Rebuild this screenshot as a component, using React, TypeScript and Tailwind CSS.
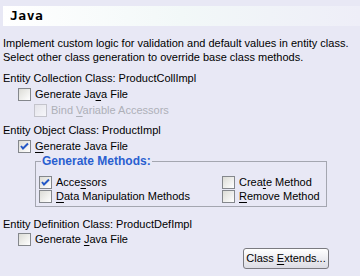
import React from "react";

const font = { fontFamily: '"Liberation Sans", Arial, sans-serif' };

function Mn({ text, at }: { text: string; at: number }) {
  return (
    <>
      {text.slice(0, at)}
      <span className="underline underline-offset-[2px]">{text[at]}</span>
      {text.slice(at + 1)}
    </>
  );
}

function Box({ checked = false, disabled = false }: { checked?: boolean; disabled?: boolean }) {
  return (
    <span
      className={
        "relative inline-block w-[13px] h-[13px] shrink-0 border " +
        (disabled
          ? "border-[#c4c4cc] bg-linear-to-br from-[#e4e4ea] to-[#f6f6fa]"
          : "border-[#84878c] bg-linear-to-br from-[#dcdcd6] to-white")
      }
    >
      {checked && (
        <svg className="absolute left-[1px] top-[1px]" width="9" height="9" viewBox="0 0 9 9">
          <path d="M1 4 L3 6.5 L8 1.5" fill="none" stroke="#2458c6" strokeWidth="2" />
        </svg>
      )}
    </span>
  );
}

function Check({
  label,
  checked,
  disabled,
}: {
  label: React.ReactNode;
  checked?: boolean;
  disabled?: boolean;
}) {
  return (
    <div className={"flex items-center gap-[4px] h-[14px] " + (disabled ? "text-[#aeb0b8]" : "text-black")}>
      <Box checked={checked} disabled={disabled} />
      <span className="leading-[14px] whitespace-nowrap">{label}</span>
    </div>
  );
}

export default function App() {
  return (
    <div style={font} className="w-[360px] h-[276px] bg-[#e8e8f5] text-[11px] text-black overflow-hidden">
      <div className="pt-[6px] pl-[3px]">
        <div className="h-[20px] bg-linear-to-r from-white via-[#f2f8f8] to-[#eeeef8] flex items-center pl-[7px]">
          <span className="font-bold text-[13px] tracking-[0.5px]" style={{ fontFamily: '"DejaVu Sans Mono", monospace' }}>
            Java
          </span>
        </div>
      </div>

      <div className="pl-[3px] pt-[10px] leading-[14px]">
        <div>Implement custom logic for validation and default values in entity class.</div>
        <div>Select other class generation to override base class methods.</div>
      </div>

      <div className="pl-[3px] pt-[7px] leading-[14px]">Entity Collection Class: ProductCollImpl</div>
      <div className="pl-[18px] pt-[2px]">
        <Check label={<Mn text="Generate Java File" at={11} />} />
      </div>
      <div className="pl-[34px] pt-[2px]">
        <Check disabled label={<Mn text="Bind Variable Accessors" at={5} />} />
      </div>

      <div className="pl-[3px] pt-[6px] leading-[14px]">Entity Object Class: ProductImpl</div>
      <div className="pl-[18px] pt-[2px]">
        <Check checked label={<Mn text="Generate Java File" at={0} />} />
      </div>

      <fieldset className="ml-[35px] mt-[1px] w-[292px] h-[53px] border border-[#a4a6b0] px-[3px] pt-0 pb-0">
        <legend className="px-[1px] text-[#2a5fd0] font-bold text-[12px] leading-[14px] ml-[2px]">
          Generate Methods:
        </legend>
        <div className="flex pt-[7px]">
          <div className="flex flex-col w-[183px]">
            <Check checked label={<Mn text="Accessors" at={4} />} />
            <Check label={<Mn text="Data Manipulation Methods" at={0} />} />
          </div>
          <div className="flex flex-col">
            <Check label={<Mn text="Create Method" at={4} />} />
            <Check label={<Mn text="Remove Method" at={0} />} />
          </div>
        </div>
      </fieldset>

      <div className="pl-[3px] pt-[10px] leading-[14px]">Entity Definition Class: ProductDefImpl</div>
      <div className="pl-[18px] pt-[1px]">
        <Check label={<Mn text="Generate Java File" at={9} />} />
      </div>

      <div className="flex pl-[243px] pt-[2px]">
        <button className="w-[86px] h-[21px] rounded-[3px] border border-[#7a7a80] bg-linear-to-b from-white to-[#dcdce4] text-[11px] text-black leading-none">
          Class <Mn text="Extends..." at={0} />
        </button>
      </div>
    </div>
  );
}
